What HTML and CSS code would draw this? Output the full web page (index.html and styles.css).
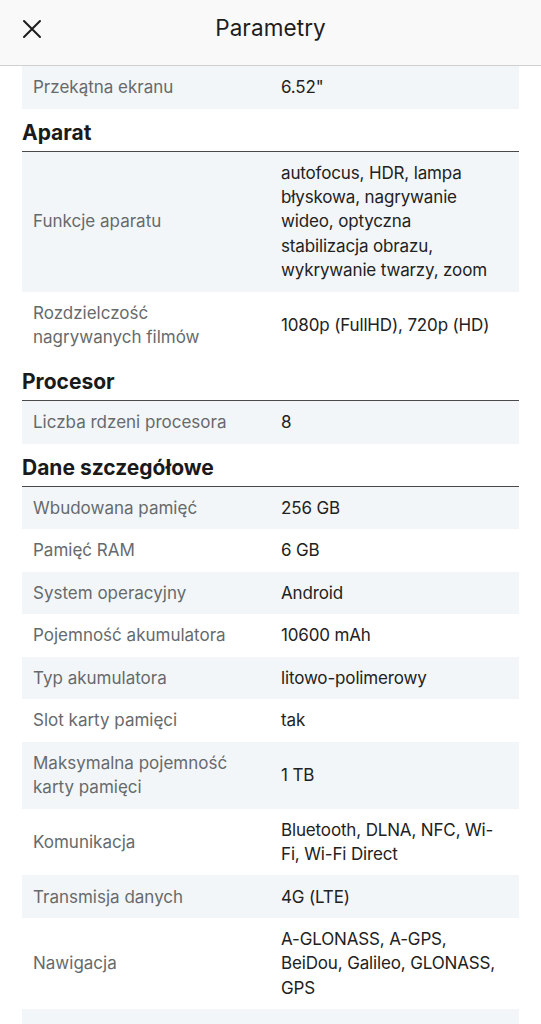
FILE: index.html
```html
<!DOCTYPE html>
<html lang="pl">
<head>
<meta charset="utf-8">
<title>Parametry</title>
<link rel="stylesheet" href="styles.css">
</head>
<body>
<header class="topbar">
  <button class="close" aria-label="Zamknij">
    <svg width="20" height="20" viewBox="0 0 20 20"><path d="M2 2 L18 18 M18 2 L2 18" stroke="#1d1d1d" stroke-width="2" stroke-linecap="round" fill="none"/></svg>
  </button>
  <h1 class="title">Parametry</h1>
</header>
<main class="content">
  <div class="row shaded"><div class="label">Przekątna ekranu</div><div class="value">6.52"</div></div>

  <h2 class="section">Aparat</h2>
  <div class="row shaded"><div class="label">Funkcje aparatu</div><div class="value">autofocus, HDR, lampa błyskowa, nagrywanie wideo, optyczna stabilizacja obrazu, wykrywanie twarzy, zoom</div></div>
  <div class="row"><div class="label">Rozdzielczość nagrywanych filmów</div><div class="value">1080p (FullHD), 720p (HD)</div></div>

  <h2 class="section">Procesor</h2>
  <div class="row shaded"><div class="label">Liczba rdzeni procesora</div><div class="value">8</div></div>

  <h2 class="section">Dane szczegółowe</h2>
  <div class="row shaded"><div class="label">Wbudowana pamięć</div><div class="value">256 GB</div></div>
  <div class="row"><div class="label">Pamięć RAM</div><div class="value">6 GB</div></div>
  <div class="row shaded"><div class="label">System operacyjny</div><div class="value">Android</div></div>
  <div class="row"><div class="label">Pojemność akumulatora</div><div class="value">10600 mAh</div></div>
  <div class="row shaded"><div class="label">Typ akumulatora</div><div class="value">litowo-polimerowy</div></div>
  <div class="row"><div class="label">Slot karty pamięci</div><div class="value">tak</div></div>
  <div class="row shaded"><div class="label">Maksymalna pojemność karty pamięci</div><div class="value">1 TB</div></div>
  <div class="row"><div class="label">Komunikacja</div><div class="value">Bluetooth, DLNA, NFC, Wi-Fi, Wi-Fi Direct</div></div>
  <div class="row shaded"><div class="label">Transmisja danych</div><div class="value">4G (LTE)</div></div>
  <div class="row"><div class="label">Nawigacja</div><div class="value">A-GLONASS, A-GPS, BeiDou, Galileo, GLONASS, GPS</div></div>
  <div class="row shaded"><div class="label">&nbsp;</div><div class="value">&nbsp;</div></div>
</main>
</body>
</html>
```
FILE: styles.css
```css
* { box-sizing: border-box; }
html, body { margin: 0; padding: 0; background: #ffffff; }
body {
  font-family: Inter, "Noto Sans", "Liberation Sans", sans-serif;
  color: #222222;
  overflow: hidden;
  height: 1024px;
}
.topbar {
  height: 66px;
  background: #f9f9f9;
  border-bottom: 1px solid #cfcfcf;
  display: flex;
  align-items: center;
  justify-content: center;
  position: relative;
}
.close {
  position: absolute;
  left: 22px;
  top: 19px;
  width: 20px;
  height: 20px;
  padding: 0;
  border: 0;
  background: none;
  display: flex;
}
.title {
  margin: 0;
  font-size: 22.5px;
  font-weight: 400;
  color: #1d1d1d;
  letter-spacing: 0.1px;
  padding-bottom: 10px;
}
.content {
  padding: 0 22px;
}
.row {
  display: grid;
  grid-template-columns: 248px 1fr;
  align-items: center;
  padding: 9px 11px;
  font-size: 17px;
  line-height: 24.4px;
  min-height: 42.5px;
}
.row.shaded { background: #f3f6f8; }
.label { color: #666a6d; padding-right: 36px; }
.value { color: #222222; padding-right: 6px; letter-spacing: -0.15px; }
.section {
  margin: 0;
  padding: 11px 0 6px;
  font-size: 21px;
  line-height: 25px;
  font-weight: 700;
  color: #1a1a1a;
  border-bottom: 1.5px solid #4a4a4a;
}
```
